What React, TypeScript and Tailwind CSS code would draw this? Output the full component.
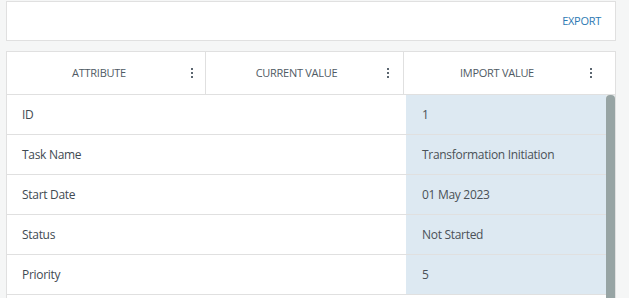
import React from "react";

const rows: [string, string][] = [
  ["ID", "1"],
  ["Task Name", "Transformation Initiation"],
  ["Start Date", "01 May 2023"],
  ["Status", "Not Started"],
  ["Priority", "5"],
  ["", ""],
];

function Dots() {
  return (
    <div className="flex flex-col gap-[2px]">
      <span className="block w-[2px] h-[2px] bg-[#5b6670]" />
      <span className="block w-[2px] h-[2px] bg-[#5b6670]" />
      <span className="block w-[2px] h-[2px] bg-[#5b6670]" />
    </div>
  );
}

function HeaderCell({ label, w, last, pr }: { label: string; w: string; last?: boolean; pr: string }) {
  return (
    <div className={`${w} flex items-center ${last ? "" : "border-r border-[#e0e0e0]"}`}>
      <div className="flex-1 text-center text-[11px] text-[#4f5a64] tracking-tight">{label}</div>
      <div className={pr}>
        <Dots />
      </div>
    </div>
  );
}

export default function App() {
  return (
    <div
      className="w-[629px] h-[298px] overflow-hidden bg-[#f5f6f6] pt-[1px] pl-[6px] pr-[13px]"
      style={{ fontFamily: '"Open Sans", "Liberation Sans", sans-serif' }}
    >
      <div className="h-[40px] bg-white border border-[#e0e0e0] flex items-center justify-end pr-[14px]">
        <span className="text-[11px] text-[#2d79b3] font-medium tracking-tight">EXPORT</span>
      </div>
      <div className="mt-[10px] bg-white border border-[#e0e0e0] border-b-0 h-[260px] flex flex-col">
        <div className="flex h-[43px] border-b border-[#e0e0e0]">
          <HeaderCell label="ATTRIBUTE" w="w-[199px]" pr="pr-[12px]" />
          <HeaderCell label="CURRENT VALUE" w="w-[198px]" pr="pr-[14px]" />
          <HeaderCell label="IMPORT VALUE" w="w-[203px]" pr="pr-[15px]" last />
          <div className="flex-1" />
        </div>
        <div className="flex flex-1 overflow-hidden">
          <div className="flex-1">
            {rows.map(([a, v], i) => (
              <div key={i} className="flex h-[40px] border-b border-[#e0e0e0] text-[12px] text-[#3f4a52] tracking-tight">
                <div className="w-[399px] flex items-center pl-[15px]">{a}</div>
                <div className={`flex-1 flex items-center pl-[16px] text-[#4a5157] ${i < 5 ? "bg-[#dde9f2]" : ""}`}>{v}</div>
              </div>
            ))}
          </div>
          <div className="w-[9px] bg-[#e9eeee] flex flex-col">
            <div className="h-[300px] bg-[#97a4a4] rounded-t-[4px]" />
          </div>
        </div>
      </div>
    </div>
  );
}
